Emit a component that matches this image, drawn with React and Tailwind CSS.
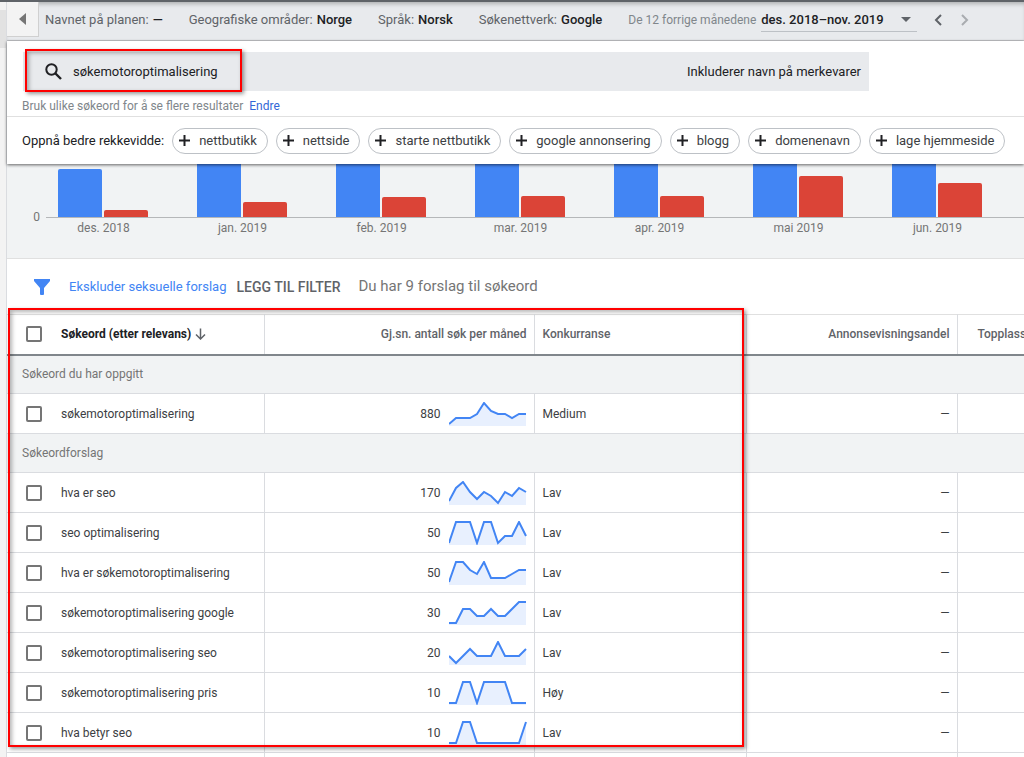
import React from "react";

const planSettings = [
  { label: "Navnet på planen:", value: "—" },
  { label: "Geografiske områder:", value: "Norge" },
  { label: "Språk:", value: "Norsk" },
  { label: "Søkenettverk:", value: "Google" },
];

const suggestions = [
  "nettbutikk",
  "nettside",
  "starte nettbutikk",
  "google annonsering",
  "blogg",
  "domenenavn",
  "lage hjemmeside",
];

// Bar heights in pixels above the zero line
const months = [
  { label: "des. 2018", total: 48, mobile: 7 },
  { label: "jan. 2019", total: 58, mobile: 15 },
  { label: "feb. 2019", total: 60, mobile: 20 },
  { label: "mar. 2019", total: 60, mobile: 21 },
  { label: "apr. 2019", total: 60, mobile: 21 },
  { label: "mai 2019", total: 64, mobile: 41 },
  { label: "jun. 2019", total: 62, mobile: 34 },
];

// trend: twelve monthly y values, 0 is the top of the sparkline
const sections = [
  {
    title: "Søkeord du har oppgitt",
    rows: [
      { keyword: "søkemotoroptimalisering", volume: 880, competition: "Medium", trend: [22, 16, 16, 16, 12, 1, 9, 12, 12, 16, 12, 12] },
    ],
  },
  {
    title: "Søkeordforslag",
    rows: [
      { keyword: "hva er seo", volume: 170, competition: "Lav", trend: [20, 7, 1, 11, 18, 11, 15, 22, 11, 15, 7, 11] },
      { keyword: "seo optimalisering", volume: 50, competition: "Lav", trend: [22, 1, 1, 1, 22, 1, 1, 22, 15, 15, 1, 15] },
      { keyword: "hva er søkemotoroptimalisering", volume: 50, competition: "Lav", trend: [21, 1, 1, 9, 13, 1, 17, 17, 17, 13, 9, 9] },
      { keyword: "søkemotoroptimalisering google", volume: 30, competition: "Lav", trend: [22, 22, 8, 8, 15, 15, 8, 15, 15, 8, 1, 1] },
      { keyword: "søkemotoroptimalisering seo", volume: 20, competition: "Lav", trend: [15, 22, 15, 8, 15, 15, 15, 1, 15, 15, 15, 8] },
      { keyword: "søkemotoroptimalisering pris", volume: 10, competition: "Høy", trend: [22, 22, 1, 1, 22, 1, 1, 1, 1, 22, 22, 22] },
      { keyword: "hva betyr seo", volume: 10, competition: "Lav", trend: [22, 22, 1, 1, 22, 22, 22, 22, 22, 22, 22, 1] },
    ],
  },
];

const Sparkline = ({ trend }) => {
  const points = trend.map((y, i) => `${i * 7},${y}`).join(" ");
  return (
    <svg width="78" height="24" viewBox="0 0 78 24" aria-hidden="true">
      <polygon points={`0,24 ${points} 77,24`} fill="#e8f0fe" />
      <polyline points={points} fill="none" stroke="#4285f4" strokeWidth="2" />
    </svg>
  );
};

const Checkbox = ({ label }) => (
  <input
    type="checkbox"
    aria-label={label}
    className="block size-4 appearance-none rounded-xs border-2 border-[#757575] bg-white checked:bg-[#4285f4]"
  />
);

const PlanBar = () => (
  <header className="flex h-[39px] items-start border-b border-[#c4c6c9] bg-[#e8eaed] text-[13px] whitespace-nowrap shadow-[inset_0_4px_4px_-2px_rgba(0,0,0,0.25)]">
    <button
      aria-label="Skjul meny"
      className="flex h-[35px] w-8 shrink-0 items-center justify-center border-r border-b border-[#d0d0d0] bg-[#f3f3f3]"
    >
      <svg width="8" height="12" viewBox="0 0 8 12" aria-hidden="true">
        <path d="M7 0v12L0 6z" fill="#757575" />
      </svg>
    </button>
    <dl className="flex h-9 items-center gap-[26px] pl-1.5">
      {planSettings.map((item) => (
        <div key={item.label} className="flex gap-1">
          <dt className="text-[#5f6368]">{item.label}</dt>
          <dd className="font-medium text-[#202124]">{item.value}</dd>
        </div>
      ))}
    </dl>
    <div className="flex h-9 items-center pl-[26px]">
      <label htmlFor="period" className="text-xs text-[#80868b]">
        De 12 forrige månedene
      </label>
      <div className="ml-[5px] flex h-6 w-[156px] items-center border-b border-[#bdc1c6]">
        <select id="period" className="min-w-0 flex-1 appearance-none font-medium text-[#202124]">
          <option>des. 2018–nov. 2019</option>
        </select>
        <svg className="mr-1.5" width="10" height="5" viewBox="0 0 10 5" aria-hidden="true">
          <path d="M0 0h10L5 5z" fill="#5f6368" />
        </svg>
      </div>
      <button aria-label="Forrige periode" className="ml-[17px]">
        <svg width="8" height="12" viewBox="0 0 8 12" aria-hidden="true">
          <path d="M7 1L2 6l5 5" fill="none" stroke="#5f6368" strokeWidth="2" />
        </svg>
      </button>
      <button aria-label="Neste periode" className="ml-[19px]">
        <svg width="8" height="12" viewBox="0 0 8 12" aria-hidden="true">
          <path d="M1 1l5 5-5 5" fill="none" stroke="#a9acb0" strokeWidth="2" />
        </svg>
      </button>
    </div>
  </header>
);

const SearchPanel = () => (
  <section className="relative z-10 bg-white shadow-[0_1px_3px_rgba(0,0,0,0.6)]">
    <div className="pt-[11px] pr-[155px] pl-4">
      <div className="relative flex h-[39px] items-center bg-[#e8eaed] pr-2 pl-[22px] text-[13px] text-[#202124]">
        <svg width="17" height="17" viewBox="0 0 17 17" fill="none" stroke="#202124" aria-hidden="true">
          <circle cx="6.5" cy="6.5" r="5.2" strokeWidth="2" />
          <path d="M10.5 10.5L16 16" strokeWidth="2.4" />
        </svg>
        <input aria-label="Søkeord" defaultValue="søkemotoroptimalisering" className="ml-[11px] w-[160px] outline-none" />
        <span className="ml-auto">Inkluderer navn på merkevarer</span>
        <div className="pointer-events-none absolute -top-[3px] left-0.5 h-[43px] w-[217px] border-2 border-[#ff0000] shadow-[2px_2px_4px_rgba(0,0,0,0.4),inset_2px_2px_4px_rgba(0,0,0,0.3)]" />
      </div>
    </div>
    <p className="flex h-[26px] items-center gap-1.5 border-b border-[#e0e0e0] pt-1 pl-[15px] text-xs text-[#80868b]">
      Bruk ulike søkeord for å se flere resultater
      <a href="#endre" className="text-[#3367d6]">Endre</a>
    </p>
    <div className="flex h-[47px] items-center gap-2 overflow-hidden pl-[15px] text-[13px] whitespace-nowrap text-[#202124]">
      <span>Oppnå bedre rekkevidde:</span>
      {suggestions.map((word) => (
        <button key={word} className="flex h-[26px] shrink-0 items-center gap-[9px] rounded-full border border-[#bdc1c6] pr-2.5 pl-1.5 text-[#3c4043]">
          <svg width="11" height="11" viewBox="0 0 11 11" stroke="#202124" strokeWidth="2" aria-hidden="true">
            <path d="M5.5 0v11M0 5.5h11" />
          </svg>
          {word}
        </button>
      ))}
    </div>
  </section>
);

const VolumeChart = () => (
  <section className="flex h-[95px] overflow-hidden border-b border-[#e0e0e0] bg-[#f1f3f4] text-xs text-[#757575]">
    <span className="w-[39px] shrink-0 pt-[45px] pr-1.5 text-right">0</span>
    <div className="min-w-0 flex-1">
      <div className="flex h-[54px] items-end border-b border-[#b5b7b9] pl-3">
        {months.map((month) => (
          <div key={month.label} className="flex w-[139px] shrink-0 items-end gap-0.5">
            <div className="w-11 rounded-t-xs bg-[#4285f4]" style={{ height: `${month.total}px` }} />
            <div className="w-11 rounded-t-xs bg-[#db4437]" style={{ height: `${month.mobile}px` }} />
          </div>
        ))}
      </div>
      <div className="flex pt-0.5 pl-3">
        {months.map((month) => (
          <span key={month.label} className="w-[139px] shrink-0 pr-12 text-center">
            {month.label}
          </span>
        ))}
      </div>
    </div>
  </section>
);

const FilterBar = () => (
  <div className="flex h-[55px] items-center pl-[27px] whitespace-nowrap">
    <svg width="16" height="16" viewBox="0 0 16 16" aria-hidden="true">
      <path d="M0 0h16v2l-6 7v6.500l-1 .5h-2l-1-.5V9L0 2z" fill="#4285f4" />
    </svg>
    <a href="#filter" className="ml-[19px] text-[13px] text-[#4285f4]">Ekskluder seksuelle forslag</a>
    <button className="ml-2.5 text-sm font-medium text-[#5f6368]">LEGG TIL FILTER</button>
    <span className="ml-[18px] text-[15px] text-[#757575]">Du har 9 forslag til søkeord</span>
  </div>
);

const KeywordTable = () => (
  <div className="relative">
    <table className="w-full table-fixed border-collapse text-xs text-[#3c4043]">
      <colgroup>
        <col className="w-[257px]" />
        <col className="w-[270px]" />
        <col className="w-[212px]" />
        <col className="w-[211px]" />
        <col />
      </colgroup>
      <thead>
        <tr className="h-10 border-t border-b-2 border-t-[#e0e0e0] border-b-[#80868b] whitespace-nowrap text-[#5f6368]">
          <th className="border-r border-[#dadce0] pl-[19px] text-left font-bold text-[#202124]">
            <div className="flex items-center">
              <Checkbox label="Velg alle" />
              <span className="ml-[19px]">Søkeord (etter relevans)</span>
              <svg className="ml-1" width="11" height="12" viewBox="0 0 11 12" fill="none" stroke="#5f6368" strokeWidth="1.5" aria-hidden="true">
                <path d="M5.500 0.500v10M1 6.500l4.500 4.500L10 6.500" />
              </svg>
            </div>
          </th>
          <th className="border-r border-[#dadce0] pr-[7px] text-right font-medium">Gj.sn. antall søk per måned</th>
          <th className="border-r border-[#dadce0] px-2 text-left font-medium">Konkurranse</th>
          <th className="border-r border-[#dadce0] pr-[7px] text-right font-medium">Annonsevisningsandel</th>
          <th className="pl-5 text-left font-medium">Topplass</th>
        </tr>
      </thead>
      {sections.map((section) => (
        <tbody key={section.title}>
          <tr className="h-[39px] border-b border-[#dadce0] bg-[#f1f3f4]">
            <th colSpan={5} className="pl-[15px] text-left font-normal text-[#757575]">
              {section.title}
            </th>
          </tr>
          {section.rows.map((row) => (
            <tr key={row.keyword} className="h-10 border-b border-[#dadce0]">
              <td className="border-r border-[#dadce0] pl-[19px]">
                <div className="flex items-center gap-[19px]">
                  <Checkbox label={row.keyword} />
                  {row.keyword}
                </div>
              </td>
              <td className="border-r border-[#dadce0] pr-[7px]">
                <div className="flex items-center justify-end gap-2">
                  {row.volume}
                  <Sparkline trend={row.trend} />
                </div>
              </td>
              <td className="border-r border-[#dadce0] px-2">{row.competition}</td>
              <td className="border-r border-[#dadce0] pr-[7px] text-right">—</td>
              <td />
            </tr>
          ))}
        </tbody>
      ))}
      <tbody>
        <tr className="h-10">
          <td className="border-r border-[#dadce0]" />
          <td className="border-r border-[#dadce0]" />
          <td className="border-r border-[#dadce0]" />
          <td className="border-r border-[#dadce0]" />
          <td />
        </tr>
      </tbody>
    </table>
    <div className="pointer-events-none absolute -top-1.5 left-px h-[439px] w-[736px] border-2 border-[#ff0000] shadow-[2px_2px_4px_rgba(0,0,0,0.4),inset_2px_2px_4px_rgba(0,0,0,0.3)]" />
  </div>
);

const App = () => (
  <div className="flex h-screen flex-col overflow-hidden border-t-2 border-[#5f6368] bg-[#f3f3f3] font-['Roboto',sans-serif]">
    <div className="flex min-h-0 flex-1">
      <aside className="w-[7px] shrink-0 border-r border-[#dadce0] pt-2">
        <div className="h-[38px] bg-[#e2e2e2]" />
      </aside>
      <main className="min-w-0 flex-1 bg-white">
        <PlanBar />
        <SearchPanel />
        <VolumeChart />
        <FilterBar />
        <KeywordTable />
      </main>
    </div>
  </div>
);

export default App;
